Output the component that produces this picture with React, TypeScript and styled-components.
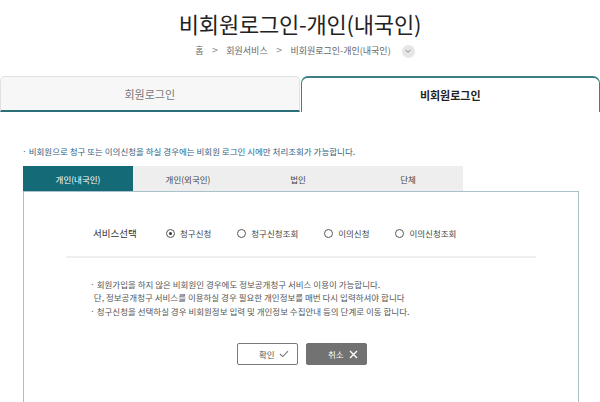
import React from "react";
import styled, { createGlobalStyle } from "styled-components";

const GlobalStyle = createGlobalStyle`
  html, body {
    margin: 0;
    padding: 0;
    background: #fff;
  }
  body {
    font-family: "Noto Sans CJK KR", "Noto Sans", sans-serif;
    color: #333;
    width: 600px;
    height: 402px;
    overflow: hidden;
  }
`;

const subTabs = ["개인(내국인)", "개인(외국인)", "법인", "단체"];
const services = [
  { label: "청구신청", checked: true },
  { label: "청구신청조회", checked: false },
  { label: "이의신청", checked: false },
  { label: "이의신청조회", checked: false },
];

const App = (): JSX.Element => {
  // Main return
  return (
    <Page>
      <GlobalStyle />
      <Header>
        <Title>비회원로그인-개인(내국인)</Title>
        <Breadcrumb>
          <span>홈</span>
          <Arrow>&gt;</Arrow>
          <span>회원서비스</span>
          <Arrow>&gt;</Arrow>
          <span>비회원로그인-개인(내국인)</span>
          <Toggle>
            <svg width="8" height="8" viewBox="0 0 8 8">
              <path d="M1.5 3 L4 5.3 L6.5 3" fill="none" stroke="#888" strokeWidth="1" />
            </svg>
          </Toggle>
        </Breadcrumb>
      </Header>

      <MainTabs>
        <MainTab>회원로그인</MainTab>
        <MainTab active>비회원로그인</MainTab>
      </MainTabs>

      <Notice>· 비회원으로 청구 또는 이의신청을 하실 경우에는 비회원 로그인 시에만 처리조회가 가능합니다.</Notice>

      <SubTabs>
        {subTabs.map((t, i) => (
          <SubTab key={t} active={i === 0}>
            {t}
          </SubTab>
        ))}
      </SubTabs>

      <Box>
        <ServiceRow>
          <ServiceLabel>서비스선택</ServiceLabel>
          {services.map((s) => (
            <Radio key={s.label}>
              <RadioDot checked={s.checked} />
              {s.label}
            </Radio>
          ))}
        </ServiceRow>
        <Divider />
        <Guide>
          <li>
            · 회원가입을 하지 않은 비회원인 경우에도 정보공개청구 서비스 이용이 가능합니다.
            <br />
            &nbsp;&nbsp;단, 정보공개청구 서비스를 이용하실 경우 필요한 개인정보를 매번 다시 입력하셔야 합니다
          </li>
          <li>· 청구신청을 선택하실 경우 비회원정보 입력 및 개인정보 수집안내 등의 단계로 이동 합니다.</li>
        </Guide>
        <Buttons>
          <Button>
            확인
            <svg width="10" height="8" viewBox="0 0 10 8">
              <path d="M1 4 L3.8 6.6 L9 1.2" fill="none" stroke="#777" strokeWidth="1.1" />
            </svg>
          </Button>
          <Button dark>
            취소
            <svg width="9" height="9" viewBox="0 0 9 9">
              <path d="M1 1 L8 8 M8 1 L1 8" fill="none" stroke="#fff" strokeWidth="1.4" />
            </svg>
          </Button>
        </Buttons>
      </Box>
    </Page>
  );
};

export default App;

const Page = styled.div`
  width: 600px;
  display: flex;
  flex-direction: column;
`;

const Header = styled.header`
  display: flex;
  flex-direction: column;
  align-items: center;
  padding-top: 7px;
`;

const Title = styled.h1`
  margin: 0;
  font-size: 22px;
  font-weight: 400;
  color: #222;
  line-height: 32px;
  letter-spacing: -0.2px;
`;

const Breadcrumb = styled.div`
  display: flex;
  align-items: center;
  gap: 8px;
  margin-top: 4px;
  margin-left: 10px;
  font-size: 9px;
  color: #666;
  line-height: 16px;
`;

const Arrow = styled.span`
  color: #888;
  font-family: "DejaVu Sans", sans-serif;
  font-size: 8px;
`;

const Toggle = styled.span`
  width: 13px;
  height: 13px;
  border-radius: 50%;
  background: #e6e6e6;
  display: flex;
  align-items: center;
  justify-content: center;
  margin-left: 3px;
`;

const MainTabs = styled.div`
  display: flex;
  margin-top: 17px;
  height: 36px;
  gap: 1px;
`;

const MainTab = styled.div<{ active?: boolean }>`
  flex: 1;
  display: flex;
  align-items: center;
  justify-content: center;
  font-size: 11px;
  border-radius: 7px 7px 0 0;
  ${({ active }) =>
    active
      ? `
    background: #fff;
    color: #222;
    font-weight: 700;
    border: 1px solid #3d7f89;
    border-top-width: 2px;
    border-bottom: none;
  `
      : `
    background: #f7f7f7;
    color: #777;
    border: 1px solid #e2e2e2;
    border-bottom: 2px solid #2c6f79;
    border-radius: 5px 5px 0 0;
  `}
`;

const Notice = styled.p`
  margin: 32px 0 0 22px;
  font-size: 8.5px;
  color: #2e5f86;
  line-height: 14px;
`;

const SubTabs = styled.div`
  display: flex;
  margin: 8px 0 0 23px;
`;

const SubTab = styled.div<{ active?: boolean }>`
  width: 110px;
  height: 25px;
  display: flex;
  align-items: center;
  justify-content: center;
  font-size: 8.5px;
  background: ${({ active }) => (active ? "#146b77" : "#eeeeee")};
  color: ${({ active }) => (active ? "#fff" : "#444")};
`;

const Box = styled.div`
  margin: 0 21px 0 23px;
  border: 1px solid #a9c1cc;
  border-bottom: none;
  padding: 31px 42px 40px;
  display: flex;
  flex-direction: column;
`;

const ServiceRow = styled.div`
  display: flex;
  align-items: center;
  padding-left: 27px;
  height: 20px;
`;

const ServiceLabel = styled.span`
  font-size: 9.5px;
  color: #333;
  width: 73px;
`;

const Radio = styled.label`
  display: flex;
  align-items: center;
  gap: 5px;
  font-size: 8.5px;
  color: #444;
  margin-right: 26px;
`;

const RadioDot = styled.span<{ checked?: boolean }>`
  width: 7px;
  height: 7px;
  border-radius: 50%;
  border: 1px solid #555;
  display: flex;
  align-items: center;
  justify-content: center;
  &::after {
    content: "";
    width: 3px;
    height: 3px;
    border-radius: 50%;
    background: ${({ checked }) => (checked ? "#333" : "transparent")};
  }
`;

const Divider = styled.hr`
  margin: 13px 0 0;
  border: none;
  border-top: 2px solid #eeeeee;
`;

const Guide = styled.ul`
  list-style: none;
  margin: 20px 0 0;
  padding: 0 0 0 24px;
  font-size: 8.5px;
  color: #555;
  line-height: 13px;

  li + li {
    margin-top: 1px;
  }
`;

const Buttons = styled.div`
  display: flex;
  justify-content: center;
  gap: 8px;
  margin-top: 25px;
  padding-left: 2px;
`;

const Button = styled.button<{ dark?: boolean }>`
  width: 61px;
  height: 22px;
  display: flex;
  align-items: center;
  justify-content: space-between;
  padding: 0 8px 0 21px;
  font-family: "Noto Sans CJK KR", sans-serif;
  font-size: 8.5px;
  border-radius: 2px;
  border: 1px solid ${({ dark }) => (dark ? "#727272" : "#7a7a7a")};
  background: ${({ dark }) => (dark ? "#727272" : "#fff")};
  color: ${({ dark }) => (dark ? "#fff" : "#555")};
`;
